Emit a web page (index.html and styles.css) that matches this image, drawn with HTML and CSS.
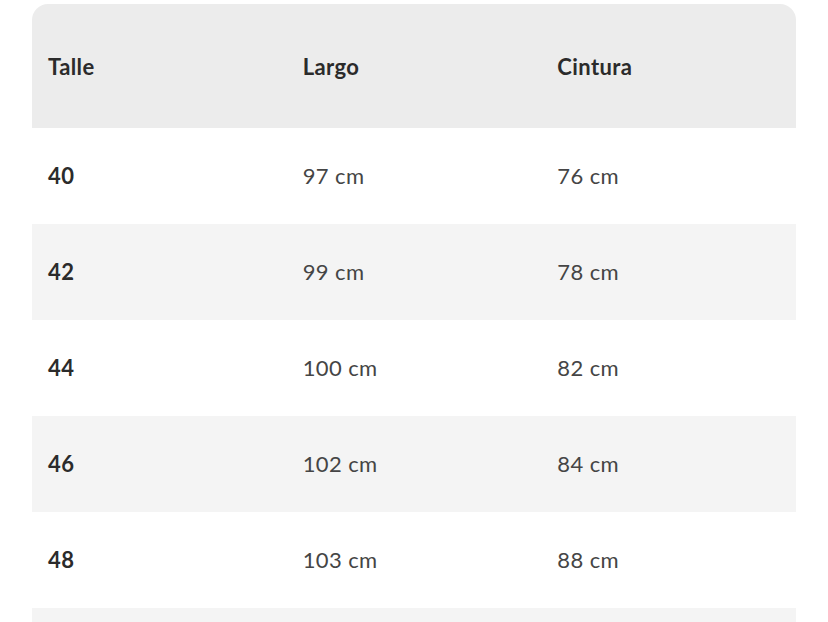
FILE: index.html
```html
<!DOCTYPE html>
<html lang="es">
<head>
<meta charset="utf-8">
<link rel="stylesheet" href="styles.css">
</head>
<body>
<div class="wrap">
<table class="sizes">
<thead>
<tr><th>Talle</th><th>Largo</th><th>Cintura</th></tr>
</thead>
<tbody>
<tr><td class="size">40</td><td>97 cm</td><td>76 cm</td></tr>
<tr><td class="size">42</td><td>99 cm</td><td>78 cm</td></tr>
<tr><td class="size">44</td><td>100 cm</td><td>82 cm</td></tr>
<tr><td class="size">46</td><td>102 cm</td><td>84 cm</td></tr>
<tr><td class="size">48</td><td>103 cm</td><td>88 cm</td></tr>
<tr class="partial"><td class="size"></td><td></td><td></td></tr>
</tbody>
</table>
</div>
</body>
</html>
```
FILE: styles.css
```css
html, body { margin: 0; padding: 0; background: #fff; }
body { font-family: "Lato", "Open Sans", sans-serif; color: #333; }
.wrap { padding: 4px 32px 0; }
.sizes { width: 100%; border-collapse: separate; border-spacing: 0; table-layout: fixed; font-size: 22px; letter-spacing: 0.4px; }
.sizes th { background: #ececec; height: 124px; text-align: left; padding: 0 16px; font-weight: 700; color: #2b2b2b; }
.sizes th:first-child { border-top-left-radius: 16px; }
.sizes th:last-child { border-top-right-radius: 16px; }
.sizes td { height: 94px; padding: 0 16px 2px; font-weight: 400; color: #454545; }
.sizes td.size { font-weight: 700; color: #2b2b2b; }
.sizes tbody tr:nth-child(even) td { background: #f4f4f4; }
```
